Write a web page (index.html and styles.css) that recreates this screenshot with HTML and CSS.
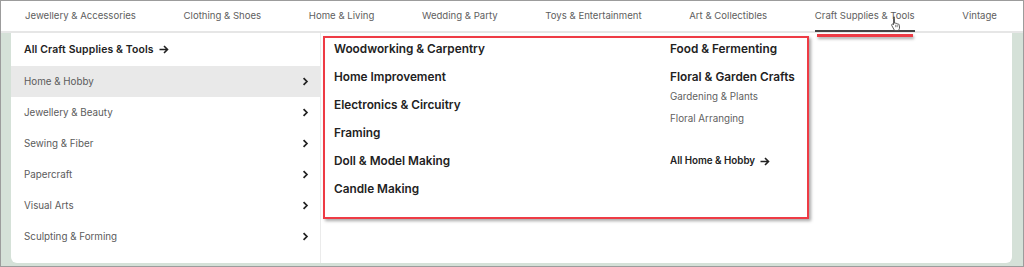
FILE: index.html
```html
<!DOCTYPE html>
<html>
<head>
<meta charset="utf-8">
<link rel="stylesheet" href="styles.css">
</head>
<body>
<div class="frame">
  <nav class="topnav">
    <a class="tab">Jewellery &amp; Accessories</a>
    <a class="tab">Clothing &amp; Shoes</a>
    <a class="tab">Home &amp; Living</a>
    <a class="tab">Wedding &amp; Party</a>
    <a class="tab">Toys &amp; Entertainment</a>
    <a class="tab">Art &amp; Collectibles</a>
    <a class="tab active">Craft Supplies &amp; Tools
      <span class="mark-line"></span>
      <svg class="cursor" width="12" height="15" viewBox="0 0 12 15"><path d="M3.5 1.2c.6 0 1 .4 1 1v5l.3-.1c.5-.1 1 .1 1.2.5l.2-.1c.5-.2 1 0 1.2.4l.3-.1c.6-.1 1.1.3 1.3.8l.5 2.4c.2 1-.1 2-.7 2.8l-.6.8H4.6L1.8 9.6c-.4-.5-.3-1.1.2-1.4.4-.3 1-.2 1.3.2l.2.3V2.2c0-.6.4-1 1-1z" fill="#fff" stroke="#333" stroke-width=".8"/><path d="M5.7 8.8v2.4M7.2 8.8v2.4" stroke="#333" stroke-width=".6"/></svg>
    </a>
    <a class="tab">Vintage</a>
  </nav>
  <div class="panel">
    <aside class="sidebar">
      <a class="all-link">All Craft Supplies &amp; Tools <svg class="arrow" width="10" height="9" viewBox="0 0 10 9"><path d="M0.5 4.5H8.5M5 1l3.5 3.5L5 8" fill="none" stroke="#222" stroke-width="1.6"/></svg></a>
      <a class="cat selected">Home &amp; Hobby <svg class="chev" viewBox="0 0 8 10" width="7" height="9"><path d="M1.8 1.2 5.6 5 1.8 8.8" fill="none" stroke="#222" stroke-width="2"/></svg></a>
      <a class="cat">Jewellery &amp; Beauty <svg class="chev" viewBox="0 0 8 10" width="7" height="9"><path d="M1.8 1.2 5.6 5 1.8 8.8" fill="none" stroke="#222" stroke-width="2"/></svg></a>
      <a class="cat">Sewing &amp; Fiber <svg class="chev" viewBox="0 0 8 10" width="7" height="9"><path d="M1.8 1.2 5.6 5 1.8 8.8" fill="none" stroke="#222" stroke-width="2"/></svg></a>
      <a class="cat">Papercraft <svg class="chev" viewBox="0 0 8 10" width="7" height="9"><path d="M1.8 1.2 5.6 5 1.8 8.8" fill="none" stroke="#222" stroke-width="2"/></svg></a>
      <a class="cat">Visual Arts <svg class="chev" viewBox="0 0 8 10" width="7" height="9"><path d="M1.8 1.2 5.6 5 1.8 8.8" fill="none" stroke="#222" stroke-width="2"/></svg></a>
      <a class="cat">Sculpting &amp; Forming <svg class="chev" viewBox="0 0 8 10" width="7" height="9"><path d="M1.8 1.2 5.6 5 1.8 8.8" fill="none" stroke="#222" stroke-width="2"/></svg></a>
    </aside>
    <section class="content">
      <div class="col">
        <a class="head">Woodworking &amp; Carpentry</a>
        <a class="head">Home Improvement</a>
        <a class="head">Electronics &amp; Circuitry</a>
        <a class="head">Framing</a>
        <a class="head">Doll &amp; Model Making</a>
        <a class="head">Candle Making</a>
      </div>
      <div class="col">
        <a class="head">Food &amp; Fermenting</a>
        <a class="head tight">Floral &amp; Garden Crafts</a>
        <a class="sub">Gardening &amp; Plants</a>
        <a class="sub">Floral Arranging</a>
        <a class="all-sub">All Home &amp; Hobby <svg class="arrow" width="10" height="9" viewBox="0 0 10 9"><path d="M0.5 4.5H8.5M5 1l3.5 3.5L5 8" fill="none" stroke="#222" stroke-width="1.6"/></svg></a>
      </div>
      <div class="highlight-box"></div>
    </section>
  </div>
</div>
</body>
</html>
```

FILE: styles.css
```css
* { box-sizing: border-box; }
html, body { margin: 0; padding: 0; }
body {
  width: 1024px;
  height: 267px;
  font-family: Inter, "Liberation Sans", sans-serif;
  background: #fff;
  overflow: hidden;
}
a { text-decoration: none; color: inherit; }

.frame {
  width: 1024px;
  height: 267px;
  border: 1px solid #9c9c9c;
  background: #d5e1d8;
  display: flex;
  flex-direction: column;
}

.topnav {
  height: 32px;
  flex: none;
  background: #fff;
  border-bottom: 2px solid #e6e6e6;
  display: flex;
  justify-content: space-between;
  align-items: stretch;
  padding: 0 26px 0 24px;
}
.tab {
  position: relative;
  display: flex;
  align-items: center;
  font-size: 9.6px;
  color: #5e5e5e;
  padding-bottom: 1px;
  white-space: nowrap;
}
.tab.active {
  border-bottom: 2px solid #444;
  margin-bottom: -1px;
  padding-bottom: 0;
}
.mark-line {
  position: absolute;
  left: 2px;
  right: 2px;
  top: 33px;
  height: 3px;
  background: #ee3b45;
  box-shadow: 1px 2px 3px rgba(0,0,0,0.35);
  z-index: 3;
}
.cursor {
  position: absolute;
  left: 75px;
  top: 15px;
  z-index: 4;
}

.panel {
  flex: 1;
  margin: 0 11px 3px 10px;
  background: #fff;
  border-radius: 0 0 6px 6px;
  display: flex;
}

.sidebar {
  width: 310px;
  flex: none;
  border-right: 1px solid #ebebeb;
  display: flex;
  flex-direction: column;
}
.all-link {
  height: 33px;
  display: flex;
  align-items: center;
  padding-left: 13px;
  font-size: 10.4px;
  font-weight: 600;
  color: #222;
  letter-spacing: 0.15px;
}
.arrow {
  display: block;
  margin-left: 5px;
}
.cat {
  height: 31px;
  display: flex;
  align-items: center;
  justify-content: space-between;
  padding: 0 11px 0 13px;
  font-size: 9.8px;
  color: #5b5b5b;
}
.cat.selected { background: #e9e9e9; }
.chev { display: block; }

.content {
  position: relative;
  flex: 1;
  display: grid;
  grid-template-columns: 336px 1fr;
  padding: 7px 0 0 13px;
  align-content: start;
}
.col { display: flex; flex-direction: column; align-items: flex-start; }
.head {
  font-size: 11.8px;
  font-weight: 600;
  color: #222;
  line-height: 18px;
  margin-bottom: 10px;
}
.head.tight { margin-bottom: 4px; }
.sub {
  font-size: 9.8px;
  color: #5f5f5f;
  line-height: 14px;
  margin-bottom: 8px;
}
.all-sub {
  display: flex;
  align-items: center;
  margin-top: 20px;
  font-size: 9.8px;
  font-weight: 600;
  color: #222;
  line-height: 14px;
}

.highlight-box {
  position: absolute;
  left: 2px;
  top: 3px;
  width: 486px;
  height: 183px;
  border: 2.5px solid #ee3b45;
  box-shadow: 2px 2px 3px rgba(0,0,0,0.35);
  pointer-events: none;
}
```
